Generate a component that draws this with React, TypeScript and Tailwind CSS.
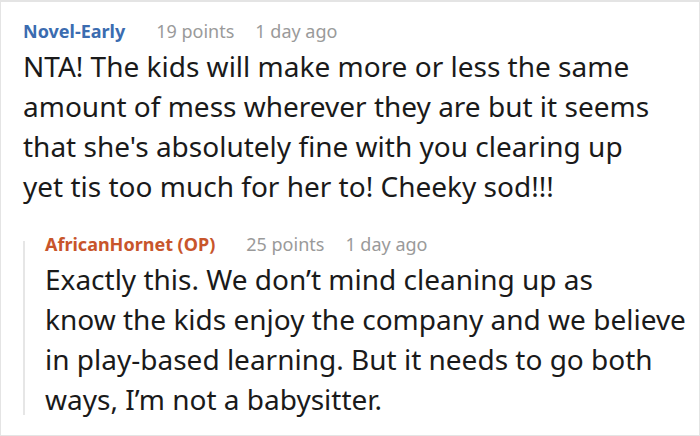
import React from 'react';

type CommentProps = {
    author: string;
    authorClass: string;
    points: string;
    age: string;
    lines: string[];
};

const Comment: React.FC<CommentProps> = ({author, authorClass, points, age, lines}) => (
    <div>
        <div className="flex items-center h-[30px] text-[18px] leading-[30px]">
            <span className={`font-bold ${authorClass}`}>{author}</span>
            <span className="ml-[31px] text-[#9a9a9a]">{points}</span>
            <span className="ml-[21px] text-[#9a9a9a]">{age}</span>
        </div>
        <div className="text-[28px] leading-[40px] text-[#1a1a1a]">
            {lines.map((l) => (
                <div key={l} className="whitespace-nowrap">{l}</div>
            ))}
        </div>
    </div>
);

export default function App() {
    return (
        <div
            className="w-[700px] h-[436px] bg-white border border-[#e4e4e4] border-t-2 overflow-hidden"
            style={{fontFamily: '"Noto Sans", "Open Sans", sans-serif'}}
        >
            <div className="pl-[22px] pt-[14px]">
                <Comment
                    author="Novel-Early"
                    authorClass="text-[#3b6cb0]"
                    points="19 points"
                    age="1 day ago"
                    lines={[
                        'NTA! The kids will make more or less the same',
                        'amount of mess wherever they are but it seems',
                        "that she's absolutely fine with you clearing up",
                        'yet tis too much for her to! Cheeky sod!!!',
                    ]}
                />
                <div className="mt-[23px] flex">
                    <div className="w-[2px] bg-[#e6e6e6] mt-[12px] mb-[4px]" />
                    <div className="pl-[20px]">
                        <Comment
                            author="AfricanHornet (OP)"
                            authorClass="text-[#c8552b]"
                            points="25 points"
                            age="1 day ago"
                            lines={[
                                'Exactly this. We don’t mind cleaning up as',
                                'know the kids enjoy the company and we believe',
                                'in play-based learning. But it needs to go both',
                                'ways, I’m not a babysitter.',
                            ]}
                        />
                    </div>
                </div>
            </div>
        </div>
    );
}
